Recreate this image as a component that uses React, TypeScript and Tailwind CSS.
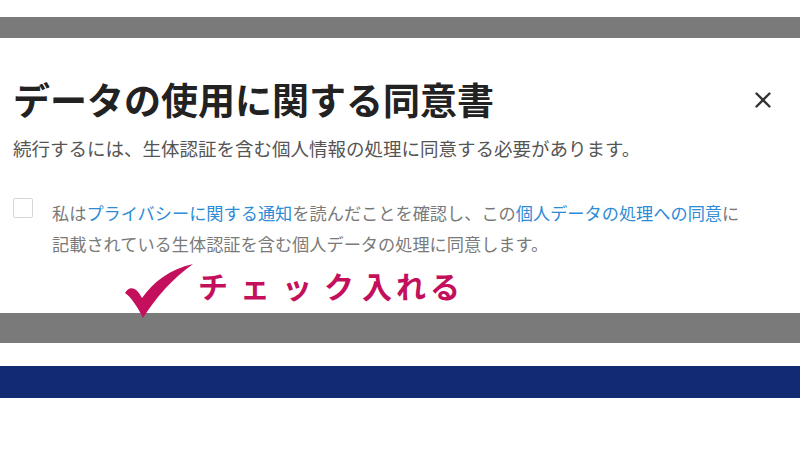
import { X } from "lucide-react";

const jp = { fontFamily: '"Noto Sans CJK JP", "Noto Sans", sans-serif' };

function CheckMark() {
  return (
    <svg width="80" height="62" viewBox="0 0 80 62" className="block">
      <path
        d="M5,33 C9,26 16,26 22,38 C33,22 50,9 73,4 C52,19 37,36 23,58 C18,48 12,38 5,33 Z"
        fill="#c4105c"
      />
    </svg>
  );
}

export default function App() {
  return (
    <div className="w-[800px] h-[450px] bg-white overflow-hidden flex flex-col" style={jp}>
      <div className="h-[17px] shrink-0" />
      <div className="h-[21px] shrink-0 bg-[#7a7a7a]" />

      {/* Consent panel */}
      <div className="relative h-[275px] shrink-0 bg-white">
        <div className="flex items-center justify-between pl-[13px] pr-[24px] pt-[43px]">
          <h1 className="text-[37px] leading-[37px] font-bold text-[#222]">
            データの使用に関する同意書
          </h1>
          <X className="w-[26px] h-[26px] text-[#333]" strokeWidth={2.2} />
        </div>
        <p className="pl-[13px] mt-[18px] text-[18.5px] leading-[24px] text-[#555]">
          続行するには、生体認証を含む個人情報の処理に同意する必要があります。
        </p>

        <div className="flex items-start gap-[19px] pl-[13px] mt-[38px]">
          <div className="w-[20px] h-[20px] shrink-0 border border-[#d6d6d6] rounded-[2px]" />
          <p className="text-[17.2px] leading-[31px] text-[#7a7a7a] -mt-[1px]">
            私は<span className="text-[#2e8bd6]">プライバシーに関する通知</span>
            を読んだことを確認し、この
            <span className="text-[#2e8bd6]">個人データの処理への同意</span>に
            <br />
            記載されている生体認証を含む個人データの処理に同意します。
          </p>
        </div>

        {/* Annotation */}
        <div className="absolute left-[120px] top-[222px] flex items-start z-10">
          <CheckMark />
          <div className="ml-[-2px] mt-[8px] text-[30px] leading-[34px] font-bold text-[#c4105c]">
            <span className="tracking-[12px]">チェッ</span>
            <span className="tracking-[8px]">ク</span>
            <span className="tracking-[4px]">入れる</span>
          </div>
        </div>
      </div>

      <div className="h-[30px] shrink-0 bg-[#7a7a7a]" />
      <div className="h-[23px] shrink-0" />
      <div className="h-[32px] shrink-0 bg-[#112a72]" />
    </div>
  );
}
